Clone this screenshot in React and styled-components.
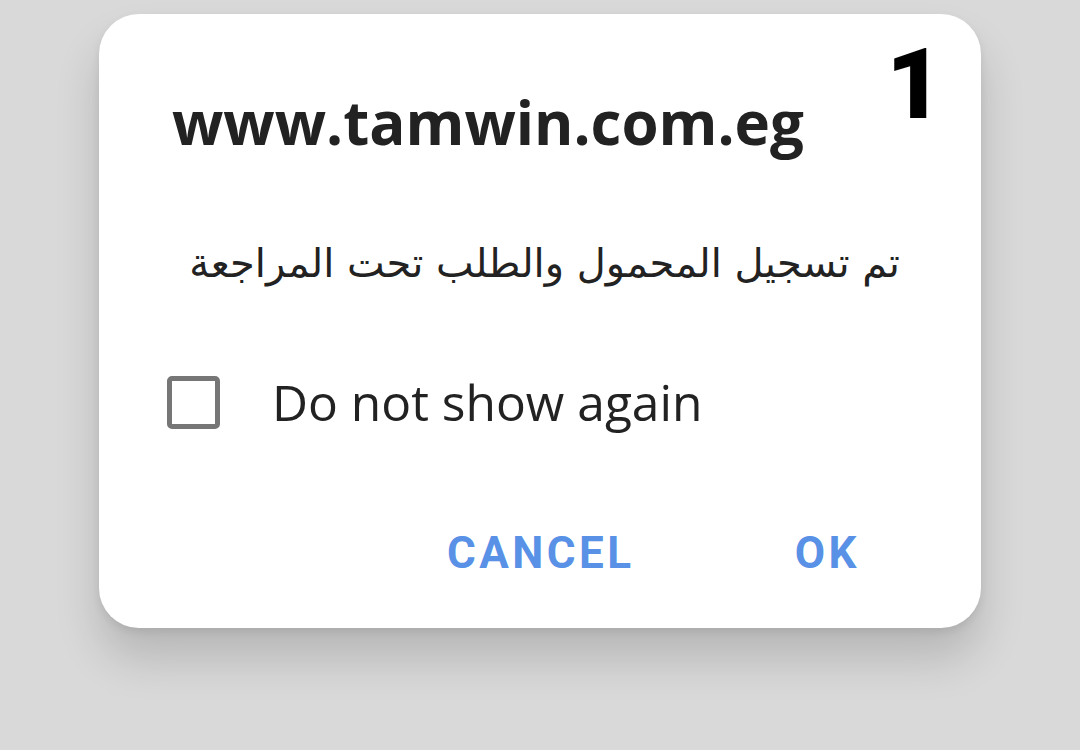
import React from "react";
import styled, { createGlobalStyle } from "styled-components";

const Global = createGlobalStyle`
  html, body { margin: 0; padding: 0; background: #d9d9d9; }
  body { font-family: "Open Sans", "Noto Sans", sans-serif; }
  #root { width: 1080px; height: 750px; overflow: hidden; }
`;

const Stage = styled.div`
  width: 1080px;
  height: 750px;
  background: #d9d9d9;
  padding: 14px 0 0 99px;
  box-sizing: border-box;
`;

const Card = styled.div`
  position: relative;
  width: 882px;
  height: 614px;
  box-sizing: border-box;
  background: #ffffff;
  border-radius: 40px;
  box-shadow: 0 30px 45px rgba(0, 0, 0, 0.16), 0 4px 8px rgba(0, 0, 0, 0.08);
  padding: 72px 81px 0 73px;
  display: flex;
  flex-direction: column;
`;

const Badge = styled.div`
  position: absolute;
  top: 22px;
  right: 38px;
  font-family: Roboto, "Liberation Sans", sans-serif;
  font-weight: 900;
  font-size: 98px;
  line-height: 1;
  color: #000;
`;

const Title = styled.h1`
  margin: 0;
  font-family: "Open Sans", sans-serif;
  font-weight: 700;
  font-size: 60px;
  line-height: 72px;
  color: #222222;
`;

const Message = styled.p`
  margin: 77px 0 0;
  direction: rtl;
  text-align: right;
  font-family: "DejaVu Sans", "Noto Sans", sans-serif;
  font-size: 40px;
  line-height: 56px;
  color: #222222;
`;

const CheckRow = styled.label`
  margin-top: 77px;
  display: flex;
  align-items: center;
  gap: 52px;
  margin-left: -5px;
`;

const Box = styled.span`
  width: 53px;
  height: 53px;
  box-sizing: border-box;
  border: 5px solid #767676;
  border-radius: 5px;
  flex: none;
`;

const CheckLabel = styled.span`
  font-family: "Open Sans", sans-serif;
  font-size: 49.7px;
  color: #222222;
`;

const Actions = styled.div`
  margin-top: 91px;
  display: flex;
  justify-content: flex-end;
  gap: 160px;
  padding-right: 40px;
`;

const ActionButton = styled.button`
  border: none;
  background: none;
  padding: 0;
  font-family: Roboto, sans-serif;
  font-weight: 700;
  font-size: 44px;
  letter-spacing: 3.5px;
  color: #5891e6;
  cursor: pointer;
`;

export default function App() {
  return (
    <>
      <Global />
      <Stage>
        <Card>
          <Badge>1</Badge>
          <Title>www.tamwin.com.eg</Title>
          <Message>تم تسجيل المحمول والطلب تحت المراجعة</Message>
          <CheckRow>
            <Box />
            <CheckLabel>Do not show again</CheckLabel>
          </CheckRow>
          <Actions>
            <ActionButton>CANCEL</ActionButton>
            <ActionButton>OK</ActionButton>
          </Actions>
        </Card>
      </Stage>
    </>
  );
}
